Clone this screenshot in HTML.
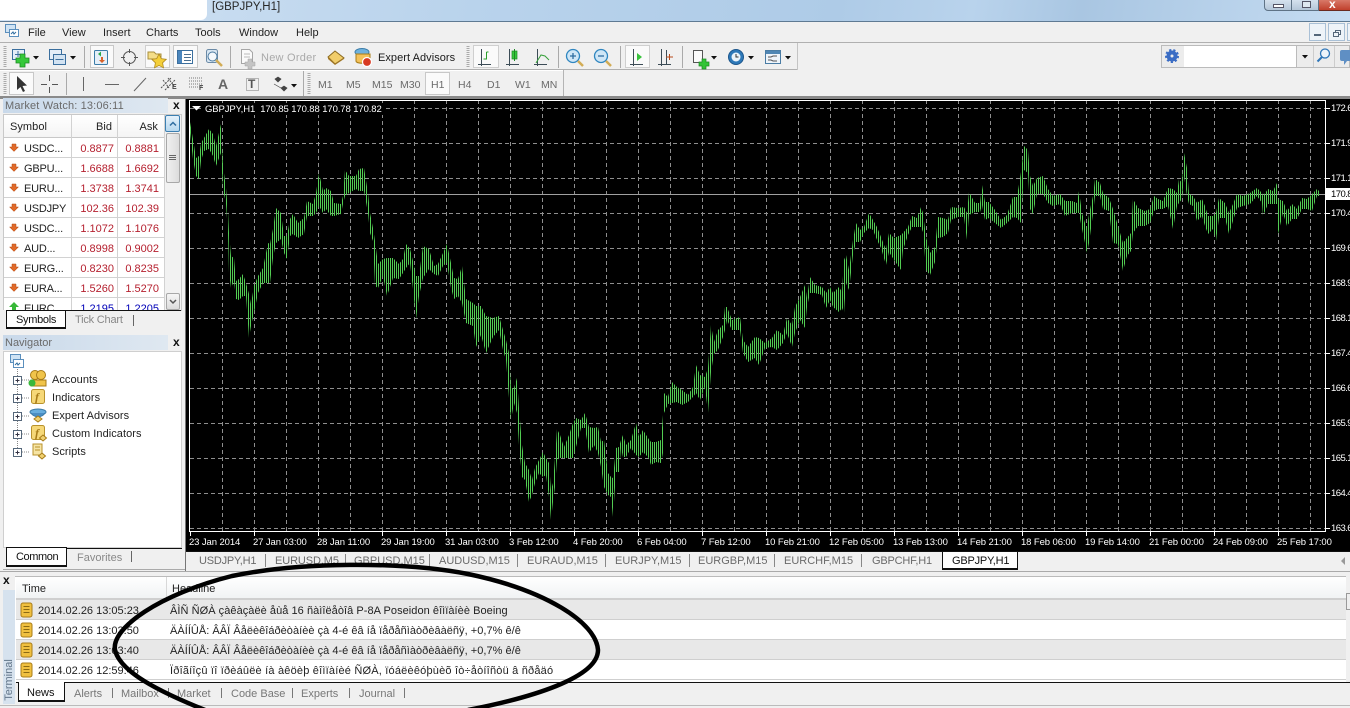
<!DOCTYPE html>
<html>
<head>
<meta charset="utf-8">
<title>GBPJPY,H1</title>
<style>
html,body{margin:0;padding:0}
body{width:1350px;height:708px;position:relative;overflow:hidden;background:#f0f0f0;font:11px "Liberation Sans",sans-serif;color:#222}
div{position:absolute;box-sizing:border-box}
.t{white-space:nowrap;line-height:14px;height:14px;margin-top:1px}
.g{color:#6a6a6a}
.w{color:#fff;font-size:9.5px;line-height:12px;height:12px;white-space:nowrap;letter-spacing:-.1px;margin-top:1px}
.y{letter-spacing:-.55px}
.r{text-align:right;color:#b5202f}
.b{color:#0000b8}
.s{letter-spacing:.05px}
svg{position:absolute;left:0;top:0}
</style>
</head>
<body>
<!-- title bar -->
<div style="left:0;top:0;width:1350px;height:21px;background:linear-gradient(100deg,#d3e3f3 0,#b9d3ec 35%,#aecbe7 62%,#b9d3ec 72%,#a9c6e2 80%,#c5dcf2 100%)"></div>
<div style="left:0;top:0;width:207px;height:20px;background:#fff;border-radius:0 0 6px 0"></div>
<div class="t" style="left:212px;top:-1px;font-size:11.5px;color:#262626">[GBPJPY,H1]</div>
<div style="left:1264px;top:-2px;width:28px;height:13px;background:linear-gradient(#d8e4f0,#b4c6d8);border:1px solid #5f7386;border-radius:0 0 0 4px"></div>
<div style="left:1292px;top:-2px;width:27px;height:13px;background:linear-gradient(#d8e4f0,#b4c6d8);border:1px solid #5f7386;border-left:0"></div>
<div style="left:1319px;top:-2px;width:31px;height:13px;background:linear-gradient(#dd8474,#c0402c);border-bottom:1px solid #6a2a20"></div>
<div style="left:1273px;top:4px;width:11px;height:4px;background:#fff;border:1px solid #556"></div>
<div style="left:1302px;top:1px;width:9px;height:7px;background:#dfe8f0;border:1px solid #556"></div>
<div class="t" style="left:1329px;top:-4px;font-weight:bold;color:#fff;font-size:12px">x</div>
<div style="left:0;top:21px;width:1350px;height:1px;background:#5f7a93"></div>

<!-- menu -->
<div style="left:0;top:42px;width:1350px;height:1px;background:#b0b0b0"></div>
<div class="t" style="left:28px;top:25px">File</div>
<div class="t" style="left:62px;top:25px">View</div>
<div class="t" style="left:103px;top:25px">Insert</div>
<div class="t" style="left:146px;top:25px">Charts</div>
<div class="t" style="left:195px;top:25px">Tools</div>
<div class="t" style="left:239px;top:25px">Window</div>
<div class="t" style="left:296px;top:25px">Help</div>
<div style="left:1309px;top:23px;width:17px;height:18px;background:#eef3f8;border:1px solid #a9c0d6"></div>
<div style="left:1328px;top:23px;width:17px;height:18px;background:#eef3f8;border:1px solid #a9c0d6"></div>
<div style="left:1347px;top:23px;width:5px;height:18px;background:#eef3f8;border:1px solid #a9c0d6"></div>
<div style="left:1314px;top:34px;width:7px;height:2px;background:#55677a"></div>
<div style="left:1335px;top:30px;width:6px;height:5px;border:1px solid #55677a"></div>
<div style="left:1333px;top:32px;width:6px;height:5px;border:1px solid #55677a;background:#eef3f8"></div>

<!-- toolbars -->
<div style="left:0;top:69px;width:798px;height:1px;background:#b0b0b0"></div>
<div style="left:797px;top:43px;width:1px;height:27px;background:#c4c4c4"></div>
<div style="left:0;top:70px;width:564px;height:1px;background:#fff"></div>
<div style="left:563px;top:70px;width:1px;height:27px;background:#b4b4b4"></div>
<div style="left:0;top:96px;width:1350px;height:3px;background:#8a8a8a"></div>
<!-- pressed buttons -->
<div style="left:90px;top:45px;width:24px;height:23px;background:#fafafa;border:1px solid #c8c8c8"></div>
<div style="left:145px;top:45px;width:25px;height:23px;background:#fafafa;border:1px solid #cfcfcf"></div>
<div style="left:173px;top:45px;width:25px;height:23px;background:#fafafa;border:1px solid #c8c8c8"></div>
<div style="left:473px;top:45px;width:26px;height:23px;background:#fafafa;border:1px solid #cfcfcf"></div>
<div style="left:625px;top:45px;width:25px;height:23px;background:#fafafa;border:1px solid #cfcfcf"></div>
<div style="left:9px;top:72px;width:25px;height:23px;background:#fafafa;border:1px solid #c8c8c8"></div>
<div style="left:425px;top:72px;width:25px;height:23px;background:#fafafa;border:1px solid #c8c8c8"></div>

<div class="t" style="left:261px;top:50px;color:#a9a9a9;letter-spacing:.25px">New Order</div>
<div class="t s" style="left:378px;top:50px;color:#1a1a1a">Expert Advisors</div>
<div class="t" style="left:218px;top:76px;font-size:14px;font-weight:bold;color:#666">A</div>
<div class="t" style="left:248px;top:76px;font-size:12px;font-weight:bold;color:#555">T</div>
<div class="t" style="left:172px;top:83px;font-size:7px;line-height:7px;height:7px;font-weight:bold;color:#444">E</div>
<div class="t" style="left:199px;top:84px;font-size:7px;line-height:7px;height:7px;font-weight:bold;color:#444">F</div>
<div class="t g" style="left:318px;top:77px;font-size:10.5px">M1</div>
<div class="t g" style="left:346px;top:77px;font-size:10.5px">M5</div>
<div class="t g" style="left:372px;top:77px;font-size:10.5px">M15</div>
<div class="t g" style="left:400px;top:77px;font-size:10.5px">M30</div>
<div class="t g" style="left:431px;top:77px;font-size:10.5px">H1</div>
<div class="t g" style="left:458px;top:77px;font-size:10.5px">H4</div>
<div class="t g" style="left:487px;top:77px;font-size:10.5px">D1</div>
<div class="t g" style="left:515px;top:77px;font-size:10.5px">W1</div>
<div class="t g" style="left:541px;top:77px;font-size:10.5px">MN</div>

<!-- right toolbar -->
<div style="left:1161px;top:45px;width:189px;height:23px;background:#ececec;border:1px solid #bbb"></div>
<div style="left:1184px;top:46px;width:113px;height:21px;background:#fff;border-right:1px solid #bbb"></div>
<div style="left:1313px;top:46px;width:1px;height:21px;background:#ccc"></div>
<div style="left:1334px;top:46px;width:1px;height:21px;background:#ccc"></div>

<!-- left panels -->
<div style="left:0;top:99px;width:186px;height:473px;background:#f0f0f0"></div>
<div style="left:185px;top:99px;width:1px;height:473px;background:#777"></div>
<!-- market watch -->
<div style="left:3px;top:98px;width:165px;height:15px;background:linear-gradient(90deg,#c9d9ea,#dfe8f1)"></div>
<div class="t g" style="left:5px;top:98px;letter-spacing:.15px">Market Watch: 13:06:11</div>
<div class="t" style="left:173px;top:97px;font-weight:bold;font-size:12px;color:#111">x</div>
<div style="left:3px;top:114px;width:179px;height:197px;background:#fff;border:1px solid #c9c9c9;overflow:hidden">
  <div style="left:0;top:0;width:161px;height:23px;background:linear-gradient(#fff,#f4f4f4)"></div>
</div>
<div style="left:4px;top:137px;width:160px;height:1px;background:#c8c8c8"></div>
<div style="left:4px;top:157px;width:160px;height:1px;background:#d2d2d2"></div>
<div style="left:4px;top:177px;width:160px;height:1px;background:#d2d2d2"></div>
<div style="left:4px;top:197px;width:160px;height:1px;background:#d2d2d2"></div>
<div style="left:4px;top:217px;width:160px;height:1px;background:#d2d2d2"></div>
<div style="left:4px;top:237px;width:160px;height:1px;background:#d2d2d2"></div>
<div style="left:4px;top:257px;width:160px;height:1px;background:#d2d2d2"></div>
<div style="left:4px;top:277px;width:160px;height:1px;background:#d2d2d2"></div>
<div style="left:4px;top:297px;width:160px;height:1px;background:#d2d2d2"></div>
<div style="left:71px;top:115px;width:1px;height:195px;background:#d2d2d2"></div>
<div style="left:117px;top:115px;width:1px;height:195px;background:#d2d2d2"></div>
<div style="left:164px;top:115px;width:1px;height:195px;background:#d2d2d2"></div>
<div class="t s" style="left:10px;top:119px">Symbol</div>
<div class="t s" style="left:60px;width:52px;top:119px;text-align:right">Bid</div>
<div class="t s" style="left:108px;width:50px;top:119px;text-align:right">Ask</div>
<div class="t" style="left:24px;top:141px;letter-spacing:-.2px">USDC...</div><div class="t r" style="left:60px;width:54px;top:141px">0.8877</div><div class="t r" style="left:106px;width:53px;top:141px">0.8881</div>
<div class="t" style="left:24px;top:161px;letter-spacing:-.2px">GBPU...</div><div class="t r" style="left:60px;width:54px;top:161px">1.6688</div><div class="t r" style="left:106px;width:53px;top:161px">1.6692</div>
<div class="t" style="left:24px;top:181px;letter-spacing:-.2px">EURU...</div><div class="t r" style="left:60px;width:54px;top:181px">1.3738</div><div class="t r" style="left:106px;width:53px;top:181px">1.3741</div>
<div class="t" style="left:24px;top:201px;letter-spacing:-.2px">USDJPY</div><div class="t r" style="left:60px;width:54px;top:201px">102.36</div><div class="t r" style="left:106px;width:53px;top:201px">102.39</div>
<div class="t" style="left:24px;top:221px;letter-spacing:-.2px">USDC...</div><div class="t r" style="left:60px;width:54px;top:221px">1.1072</div><div class="t r" style="left:106px;width:53px;top:221px">1.1076</div>
<div class="t" style="left:24px;top:241px;letter-spacing:-.2px">AUD...</div><div class="t r" style="left:60px;width:54px;top:241px">0.8998</div><div class="t r" style="left:106px;width:53px;top:241px">0.9002</div>
<div class="t" style="left:24px;top:261px;letter-spacing:-.2px">EURG...</div><div class="t r" style="left:60px;width:54px;top:261px">0.8230</div><div class="t r" style="left:106px;width:53px;top:261px">0.8235</div>
<div class="t" style="left:24px;top:281px;letter-spacing:-.2px">EURA...</div><div class="t r" style="left:60px;width:54px;top:281px">1.5260</div><div class="t r" style="left:106px;width:53px;top:281px">1.5270</div>
<div class="t" style="left:24px;top:301px;letter-spacing:-.2px">EURC</div><div class="t r b" style="left:60px;width:54px;top:301px">1.2195</div><div class="t r b" style="left:106px;width:53px;top:301px">1.2205</div>
<!-- mw scrollbar -->
<div style="left:165px;top:115px;width:16px;height:195px;background:#f2f2f2"></div>
<div style="left:165px;top:115px;width:15px;height:17px;background:linear-gradient(#e6f2fb,#b6d7ee);border:1px solid #3c7fb1;border-radius:2px"></div>
<div style="left:166px;top:133px;width:14px;height:50px;background:linear-gradient(90deg,#f0f0f0,#dcdcdc);border:1px solid #a8a8a8;border-radius:2px"></div>
<div style="left:166px;top:293px;width:14px;height:17px;background:linear-gradient(#f6f6f6,#dcdcdc);border:1px solid #a8a8a8;border-radius:2px"></div>
<div style="left:169px;top:155px;width:7px;height:5px;border-top:1px solid #666;border-bottom:1px solid #666"></div>
<div style="left:169px;top:157px;width:7px;height:1px;background:#666"></div>
<!-- mw tabs -->
<div style="left:3px;top:310px;width:178px;height:20px;background:#f0f0f0"></div>
<div style="left:65px;top:310px;width:116px;height:1px;background:#111"></div>
<div style="left:6px;top:310px;width:60px;height:19px;background:#fff;border:1px solid #111;border-bottom-width:2px"></div>
<div class="t" style="left:16px;top:312px;color:#111;letter-spacing:-.3px">Symbols</div>
<div class="t g" style="left:75px;top:312px;color:#888;letter-spacing:-.2px">Tick Chart</div>
<div style="left:133px;top:315px;width:1px;height:11px;background:#666"></div>

<!-- navigator -->
<div style="left:3px;top:335px;width:165px;height:15px;background:linear-gradient(90deg,#c9d9ea,#dfe8f1)"></div>
<div class="t g" style="left:5px;top:335px">Navigator</div>
<div class="t" style="left:173px;top:334px;font-weight:bold;font-size:12px;color:#111">x</div>
<div style="left:3px;top:351px;width:179px;height:197px;background:#fff;border:1px solid #cfcfcf"></div>
<div class="t s" style="left:52px;top:372px">Accounts</div>
<div class="t s" style="left:52px;top:390px">Indicators</div>
<div class="t s" style="left:52px;top:408px">Expert Advisors</div>
<div class="t s" style="left:52px;top:426px">Custom Indicators</div>
<div class="t s" style="left:52px;top:444px">Scripts</div>
<div style="left:3px;top:548px;width:179px;height:19px;background:#f0f0f0"></div>
<div style="left:66px;top:548px;width:116px;height:1px;background:#111"></div>
<div style="left:6px;top:547px;width:61px;height:20px;background:#fff;border:1px solid #111;border-bottom-width:2px"></div>
<div class="t" style="left:16px;top:549px;color:#111;letter-spacing:-.4px">Common</div>
<div class="t g" style="left:77px;top:550px;color:#888">Favorites</div>
<div style="left:131px;top:551px;width:1px;height:11px;background:#666"></div>
<div style="left:3px;top:569px;width:182px;height:1px;background:#aaa"></div>

<!-- chart -->
<div style="left:186px;top:99px;width:1164px;height:452px;background:#000"></div>
<svg width="1350" height="708" viewBox="0 0 1350 708">
<defs>
<pattern id="bars" x="0" y="0" width="2" height="4" patternUnits="userSpaceOnUse"><rect x="0" y="0" width="1" height="4" fill="#52cc52" shape-rendering="crispEdges"/></pattern>
</defs>
<g stroke="#8e8e8e" stroke-width="1" fill="none" stroke-dasharray="4 3" shape-rendering="crispEdges">
<path d="M190 108.5H1330M190 143.5H1330M190 178.5H1330M190 213.5H1330M190 248.5H1330M190 283.5H1330M190 318.5H1330M190 353.5H1330M190 388.5H1330M190 423.5H1330M190 458.5H1330M190 493.5H1330M190 528.5H1330"/>
<path d="M222.5 100V531M254.5 100V531M286.5 100V531M318.5 100V531M350.5 100V531M382.5 100V531M414.5 100V531M446.5 100V531M478.5 100V531M510.5 100V531M542.5 100V531M574.5 100V531M606.5 100V531M638.5 100V531M670.5 100V531M702.5 100V531M734.5 100V531M766.5 100V531M798.5 100V531M830.5 100V531M862.5 100V531M894.5 100V531M926.5 100V531M958.5 100V531M990.5 100V531M1022.5 100V531M1054.5 100V531M1086.5 100V531M1118.5 100V531M1150.5 100V531M1182.5 100V531M1214.5 100V531M1246.5 100V531M1278.5 100V531M1310.5 100V531"/>
</g>
<path d="M190 194.5H1325" stroke="#a0a0a0" shape-rendering="crispEdges"/>
<polygon fill="url(#bars)" points="190,122 193,139 196,158 199,156 201,143 204,138 209,129 213,134 216,146 221,124 223,166 226,188 228,211 229,233 231,256 234,258 236,281 239,279 243,274 246,283 249,294 251,304 254,286 258,276 263,268 268,243 270,244 273,229 276,208 281,213 284,236 287,236 290,219 293,214 298,223 304,218 307,201 313,204 316,193 319,173 323,191 326,188 331,191 334,203 341,204 343,196 345,170 349,176 356,176 359,169 364,168 368,193 370,213 373,228 375,241 378,264 383,259 387,258 393,258 399,264 403,259 406,244 410,249 413,261 416,276 419,276 423,246 429,249 434,266 438,264 443,253 447,244 451,263 454,278 458,279 462,266 466,299 473,303 476,306 481,306 486,316 493,318 499,316 503,330 506,340 509,353 511,388 514,388 517,378 519,408 522,445 525,463 529,470 532,480 535,468 539,460 543,452 546,458 549,463 551,490 553,483 555,458 557,429 560,435 564,447 569,435 573,423 576,418 581,420 585,413 589,427 594,428 598,427 601,442 604,440 608,473 611,477 613,478 616,448 619,447 621,440 623,435 626,445 631,440 636,423 639,437 643,430 648,438 651,442 656,442 661,440 663,415 664,393 668,397 672,382 677,387 682,390 688,395 693,387 696,365 700,375 705,377 708,368 711,325 714,342 718,330 723,325 725,307 727,307 732,320 740,317 743,340 748,347 755,337 759,338 765,343 772,338 777,330 783,335 787,318 792,325 795,307 800,297 805,285 807,298 810,277 815,285 822,287 826,293 830,287 833,293 839,287 842,292 844,260 846,255 849,270 853,240 856,223 860,230 864,227 869,213 873,220 877,227 881,237 886,250 889,233 894,238 901,235 903,233 908,227 912,216 917,218 921,207 923,213 926,237 930,253 935,247 938,217 943,218 948,220 951,207 958,208 964,207 967,213 969,192 975,203 980,203 982,185 985,202 989,202 995,210 1001,220 1007,215 1013,197 1017,197 1021,172 1024,146 1028,150 1030,176 1033,186 1037,178 1043,176 1048,189 1053,196 1060,194 1065,201 1072,201 1077,203 1079,191 1082,213 1085,223 1087,229 1089,214 1093,196 1095,179 1100,183 1103,193 1109,198 1113,209 1118,226 1123,243 1127,238 1131,233 1133,199 1138,208 1145,211 1150,209 1154,196 1158,199 1163,201 1168,188 1173,189 1177,193 1179,179 1182,183 1184,153 1187,168 1189,194 1193,196 1197,203 1202,199 1205,206 1208,216 1213,216 1216,213 1219,198 1225,203 1229,213 1233,204 1237,194 1243,196 1250,193 1257,188 1262,193 1263,196 1268,189 1273,191 1277,183 1278,199 1283,201 1287,211 1292,204 1297,209 1302,198 1307,199 1312,194 1317,189 1319,191 1319,196 1317,196 1312,211 1307,209 1302,209 1297,219 1292,219 1287,226 1283,213 1278,234 1277,204 1273,204 1268,204 1263,216 1262,203 1257,196 1250,204 1243,206 1237,208 1233,221 1229,234 1225,218 1219,218 1216,241 1213,229 1208,234 1205,226 1202,216 1197,221 1193,206 1189,204 1187,196 1184,176 1182,199 1179,203 1177,206 1173,229 1168,206 1163,209 1158,209 1154,211 1150,223 1145,226 1138,226 1133,233 1131,251 1127,256 1123,271 1118,244 1113,243 1109,211 1103,209 1100,196 1095,196 1093,214 1089,243 1087,253 1085,243 1082,229 1079,213 1077,213 1072,213 1065,216 1060,204 1053,206 1048,203 1043,194 1037,194 1033,214 1030,209 1028,173 1024,170 1021,223 1017,218 1013,217 1007,223 1001,228 995,223 989,218 985,220 982,205 980,212 975,212 969,215 967,240 964,217 958,217 951,220 948,233 943,237 938,238 935,262 930,275 926,270 923,232 921,227 917,227 912,227 908,235 903,250 901,270 894,260 889,252 886,265 881,248 877,240 873,230 869,228 864,233 860,242 856,242 853,255 849,290 846,283 844,313 842,308 839,312 833,307 830,300 826,308 822,295 815,293 810,293 807,307 805,328 800,320 795,333 792,347 787,333 783,343 777,350 772,347 765,348 759,365 755,358 748,362 743,353 740,330 732,330 727,320 725,330 723,337 718,350 714,354 711,372 708,413 705,387 700,400 696,393 693,397 688,402 682,405 677,402 672,403 668,404 664,413 663,453 661,463 656,462 651,465 648,457 643,452 639,457 636,455 631,448 626,457 623,457 621,448 619,472 616,472 613,517 611,497 608,495 604,487 601,467 598,453 594,445 589,453 585,428 581,428 576,447 573,458 569,458 564,458 560,458 557,460 555,487 553,502 551,520 549,497 546,475 543,477 539,473 535,483 532,495 529,502 525,480 522,477 519,445 517,413 514,403 511,420 509,398 506,360 503,350 499,330 493,337 486,353 481,335 476,347 473,326 466,323 462,303 458,296 454,299 451,288 447,263 443,266 438,276 434,274 429,269 423,278 419,296 416,319 413,289 410,263 406,268 403,273 399,279 393,278 387,296 383,276 378,288 375,286 373,241 370,233 368,213 364,191 359,191 356,189 349,193 345,196 343,204 341,214 334,216 331,216 326,209 323,213 319,206 316,213 313,216 307,216 304,234 298,238 293,234 290,236 287,259 284,253 281,239 276,243 273,258 270,283 268,283 263,283 258,293 254,313 251,326 249,338 246,296 243,296 239,300 236,299 234,281 231,288 229,273 228,233 226,204 223,189 221,153 216,166 213,156 209,149 204,151 201,161 199,179 196,176 193,159 190,133"/>
<path d="M189.5 100.5H1325.5V531.5H189.5Z" fill="none" stroke="#fff" shape-rendering="crispEdges"/>
<path d="M190.5 531V536M254.5 531V536M318.5 531V536M382.5 531V536M446.5 531V536M510.5 531V536M574.5 531V536M638.5 531V536M702.5 531V536M766.5 531V536M830.5 531V536M894.5 531V536M958.5 531V536M1022.5 531V536M1086.5 531V536M1150.5 531V536M1214.5 531V536M1278.5 531V536M1325 108.5H1330M1325 143.5H1330M1325 178.5H1330M1325 213.5H1330M1325 248.5H1330M1325 283.5H1330M1325 318.5H1330M1325 353.5H1330M1325 388.5H1330M1325 423.5H1330M1325 458.5H1330M1325 493.5H1330M1325 528.5H1330" stroke="#fff" shape-rendering="crispEdges"/>
<path d="M192 106h9l-4.500 4.500z" fill="#fff"/>
</svg>
<div style="left:204px;top:103px;width:180px;height:12px;background:#000"></div>
<div class="w" style="left:205px;top:103px">GBPJPY,H1&nbsp; 170.85 170.88 170.78 170.82</div>
<div class="w y" style="left:1331px;top:102px">172.66</div>
<div class="w y" style="left:1331px;top:137px">171.91</div>
<div class="w y" style="left:1331px;top:172px">171.16</div>
<div class="w y" style="left:1331px;top:207px">170.41</div>
<div class="w y" style="left:1331px;top:242px">169.66</div>
<div class="w y" style="left:1331px;top:277px">168.91</div>
<div class="w y" style="left:1331px;top:312px">168.16</div>
<div class="w y" style="left:1331px;top:347px">167.41</div>
<div class="w y" style="left:1331px;top:382px">166.66</div>
<div class="w y" style="left:1331px;top:417px">165.91</div>
<div class="w y" style="left:1331px;top:452px">165.16</div>
<div class="w y" style="left:1331px;top:487px">164.41</div>
<div class="w y" style="left:1331px;top:522px">163.66</div>
<div style="left:1325px;top:188px;width:25px;height:12px;background:#fff"></div>
<div class="w y" style="left:1331px;top:188px;color:#000">170.82</div>
<div class="w" style="left:189px;top:536px">23 Jan 2014</div>
<div class="w" style="left:253px;top:536px">27 Jan 03:00</div>
<div class="w" style="left:317px;top:536px">28 Jan 11:00</div>
<div class="w" style="left:381px;top:536px">29 Jan 19:00</div>
<div class="w" style="left:445px;top:536px">31 Jan 03:00</div>
<div class="w" style="left:509px;top:536px">3 Feb 12:00</div>
<div class="w" style="left:573px;top:536px">4 Feb 20:00</div>
<div class="w" style="left:637px;top:536px">6 Feb 04:00</div>
<div class="w" style="left:701px;top:536px">7 Feb 12:00</div>
<div class="w" style="left:765px;top:536px">10 Feb 21:00</div>
<div class="w" style="left:829px;top:536px">12 Feb 05:00</div>
<div class="w" style="left:893px;top:536px">13 Feb 13:00</div>
<div class="w" style="left:957px;top:536px">14 Feb 21:00</div>
<div class="w" style="left:1021px;top:536px">18 Feb 06:00</div>
<div class="w" style="left:1085px;top:536px">19 Feb 14:00</div>
<div class="w" style="left:1149px;top:536px">21 Feb 00:00</div>
<div class="w" style="left:1213px;top:536px">24 Feb 09:00</div>
<div class="w" style="left:1277px;top:536px">25 Feb 17:00</div>

<!-- chart tabs -->
<div style="left:186px;top:551px;width:1164px;height:20px;background:#f0f0f0"></div>
<div style="left:186px;top:551px;width:1164px;height:1px;background:#111"></div>
<div class="t g" style="left:199px;top:553px;letter-spacing:-.2px">USDJPY,H1</div><div style="left:265px;top:554px;width:1px;height:13px;background:#888"></div>
<div class="t g" style="left:275px;top:553px;letter-spacing:-.1px">EURUSD,M5</div><div style="left:345px;top:554px;width:1px;height:13px;background:#888"></div>
<div class="t g" style="left:354px;top:553px">GBPUSD,M15</div><div style="left:429px;top:554px;width:1px;height:13px;background:#888"></div>
<div class="t g" style="left:439px;top:553px">AUDUSD,M15</div><div style="left:517px;top:554px;width:1px;height:13px;background:#888"></div>
<div class="t g" style="left:527px;top:553px">EURAUD,M15</div><div style="left:605px;top:554px;width:1px;height:13px;background:#888"></div>
<div class="t g" style="left:615px;top:553px">EURJPY,M15</div><div style="left:689px;top:554px;width:1px;height:13px;background:#888"></div>
<div class="t g" style="left:698px;top:553px">EURGBP,M15</div><div style="left:774px;top:554px;width:1px;height:13px;background:#888"></div>
<div class="t g" style="left:784px;top:553px">EURCHF,M15</div><div style="left:861px;top:554px;width:1px;height:13px;background:#888"></div>
<div class="t g" style="left:872px;top:553px;letter-spacing:-.2px">GBPCHF,H1</div>
<div style="left:942px;top:551px;width:76px;height:19px;background:#fff;border:1px solid #111;border-bottom-width:2px"></div>
<div class="t" style="left:952px;top:553px;color:#111;letter-spacing:-.2px">GBPJPY,H1</div>
<div style="left:1341px;top:557px;width:0;height:0;border:4px solid transparent;border-right:4px solid #999;border-left:0"></div>

<!-- terminal -->
<div style="left:0;top:571px;width:1350px;height:137px;background:#f0f0f0;border-top:1px solid #aaa"></div>
<div class="t" style="left:3px;top:572px;font-weight:bold;font-size:12px;color:#111">x</div>
<div style="left:3px;top:590px;width:12px;height:114px;background:#d6e2ee"></div>
<div style="left:-19px;top:673px;width:56px;height:14px;line-height:14px;transform:rotate(-90deg);font-size:11px;color:#62768a;text-align:center">Terminal</div>
<div style="left:15px;top:576px;width:1331px;height:106px;background:#fff;border-top:1px solid #bbb"></div>
<div style="left:16px;top:577px;width:1330px;height:21px;background:linear-gradient(#fff,#f1f3f4)"></div>
<div style="left:16px;top:598px;width:1330px;height:2px;background:#cfcfcf"></div>
<div style="left:16px;top:600px;width:1330px;height:20px;background:#e8e8e8;border-bottom:1px solid #cfcfcf"></div>
<div style="left:16px;top:620px;width:1330px;height:20px;background:#fff;border-bottom:1px solid #cfcfcf"></div>
<div style="left:16px;top:640px;width:1330px;height:20px;background:#e8e8e8;border-bottom:1px solid #cfcfcf"></div>
<div style="left:16px;top:660px;width:1330px;height:20px;background:#fff;border-bottom:1px solid #cfcfcf"></div>
<div style="left:166px;top:577px;width:1px;height:22px;background:#d8d8d8"></div>
<div style="left:1346px;top:593px;width:4px;height:17px;background:#eee;border:1px solid #999;border-right:0"></div>
<div class="t" style="left:22px;top:581px">Time</div>
<div class="t" style="left:172px;top:581px">Headline</div>
<div class="t" style="left:38px;top:603px">2014.02.26 13:05:23</div>
<div class="t" style="left:38px;top:623px">2014.02.26 13:03:50</div>
<div class="t" style="left:38px;top:643px">2014.02.26 13:03:40</div>
<div class="t" style="left:38px;top:663px">2014.02.26 12:59:46</div>
<div class="t" style="left:170px;top:603px;letter-spacing:.05px">ÂÌÑ ÑØÀ çàêàçàëè åùå 16 ñàìîëåòîâ P-8A Poseidon êîìïàíèè Boeing</div>
<div class="t" style="left:170px;top:623px;letter-spacing:.03px">ÄÀÍÍÛÅ: ÂÂÏ Âåëèêîáðèòàíèè çà 4-é êâ íå ïåðåñìàòðèâàëñÿ, +0,7% ê/ê</div>
<div class="t" style="left:170px;top:643px;letter-spacing:.03px">ÄÀÍÍÛÅ: ÂÂÏ Âåëèêîáðèòàíèè çà 4-é êâ íå ïåðåñìàòðèâàëñÿ, +0,7% ê/ê</div>
<div class="t" style="left:170px;top:663px;letter-spacing:.2px">Ïðîãíîçû ïî ïðèáûëè íà àêöèþ êîìïàíèé ÑØÀ, ïóáëèêóþùèõ îò÷åòíîñòü â ñðåäó</div>
<div style="left:16px;top:682px;width:1334px;height:1px;background:#111"></div>
<div style="left:18px;top:682px;width:47px;height:20px;background:#fff;border:1px solid #111;border-top:0;border-bottom-width:2px"></div>
<div class="t" style="left:27px;top:685px;color:#111">News</div>
<div class="t" style="left:74px;top:686px;color:#777">Alerts</div>
<div class="t" style="left:121px;top:686px;color:#777">Mailbox</div>
<div class="t" style="left:177px;top:686px;color:#777">Market</div>
<div class="t" style="left:231px;top:686px;color:#777">Code Base</div>
<div class="t" style="left:301px;top:686px;color:#777">Experts</div>
<div class="t" style="left:359px;top:686px;color:#777">Journal</div>
<div style="left:112px;top:688px;width:1px;height:10px;background:#777"></div>
<div style="left:168px;top:688px;width:1px;height:10px;background:#777"></div>
<div style="left:221px;top:688px;width:1px;height:10px;background:#777"></div>
<div style="left:292px;top:688px;width:1px;height:10px;background:#777"></div>
<div style="left:349px;top:688px;width:1px;height:10px;background:#777"></div>
<div style="left:404px;top:688px;width:1px;height:10px;background:#777"></div>
<div style="left:0;top:705px;width:1350px;height:1px;background:#bbb"></div>

<!-- icons -->
<svg width="1350" height="708" viewBox="0 0 1350 708" style="pointer-events:none">
<defs>
<symbol id="dd" overflow="visible"><path d="M0 0h6l-3 3.500z" fill="#111"/></symbol>
<symbol id="grip" overflow="visible"><path d="M0 0v22" stroke="#aaa" stroke-width="3" stroke-dasharray="1 1"/></symbol>
<symbol id="dn" overflow="visible"><path d="M-2 -4h4v3h2.500l-4.500 4.500l-4.500 -4.500h2.500z" fill="#e06a2a" stroke="#b34a14" stroke-width=".5"/></symbol>
<symbol id="doc" overflow="visible"><rect x="-5" y="-7" width="11" height="14" rx="2" fill="#f0c040" stroke="#a87c18"/><path d="M-2.500-3.500h6M-2.500-.5h6M-2.500 2.500h6" stroke="#8a6a14"/></symbol>
<symbol id="plus" overflow="visible"><rect x="-4" y="-4" width="8" height="8" fill="#fff" stroke="#55677a"/><path d="M-2 0h4M0-2v4" stroke="#334"/></symbol>
</defs>

<!-- menu icon -->
<g fill="#fff" stroke="#5b8fbd"><rect x="5.500" y="24.500" width="10" height="8" fill="#cfe3f4"/><rect x="9.500" y="29.500" width="9" height="7"/></g>
<path d="M11 34l2-2l1 2l2-2" stroke="#2f6da0" fill="none"/>
<!-- toolbar grips -->
<use href="#grip" x="5" y="46"/><use href="#grip" x="5" y="73"/><use href="#grip" x="468" y="46"/><use href="#grip" x="309" y="73"/>
<!-- separators -->
<g stroke="#aaa" shape-rendering="crispEdges"><path d="M84.500 46v22M230.500 46v22M558.500 46v22M620.500 46v22M682.500 46v22M66.500 73v22M303.500 71v25"/></g>
<!-- new chart -->
<rect x="12.500" y="49.500" width="12" height="10" fill="#e4eef8" stroke="#3b6f9e"/><path d="M15 54.500h7M18 51v6" stroke="#3b6f9e"/>
<path d="M20 54h5v4h4v5h-4v4h-5v-4h-4v-5h4z" fill="#35c83a" stroke="#1c8a22" stroke-width=".8"/>
<use href="#dd" x="33" y="56"/>
<!-- profiles -->
<rect x="49.500" y="49.500" width="12" height="10" fill="#e4eef8" stroke="#3b6f9e"/><rect x="53.500" y="54.500" width="12" height="10" fill="#d3e3f2" stroke="#3b6f9e"/><path d="M55.500 59.500h8" stroke="#3b6f9e"/>
<use href="#dd" x="70" y="56"/>
<!-- market watch -->
<rect x="94.500" y="50.500" width="13" height="14" rx="1" fill="#e5eff8" stroke="#3b7ca8"/><path d="M98 54l3-2.500 0 5z" fill="#2aa84a"/><path d="M101 57v3h-2l3 3 3-3h-2v-3z" fill="#d8622a"/>
<!-- crosshair -->
<circle cx="129.500" cy="57.500" r="6" fill="none" stroke="#555"/><path d="M129.500 49v4M129.500 62v4M121 57.500h4M134 57.500h4" stroke="#555"/>
<!-- navigator folder star -->
<path d="M148 52h6l2 2h5v5h-13z" fill="#f4dd88" stroke="#a88e3c"/><path d="M159 54l2.300 4.600 5 .7-3.700 3.500.9 5-4.500-2.400-4.500 2.400.9-5-3.700-3.500 5-.7z" fill="#f4cf3a" stroke="#b08a20" stroke-width=".8"/>
<!-- terminal -->
<rect x="177.500" y="50.500" width="15" height="13" fill="#fff" stroke="#3b6f9e"/><rect x="178" y="51" width="4" height="12" fill="#4b86bd"/><path d="M184 54.500h7M184 57.500h7M184 60.500h7" stroke="#4b6f90"/>
<!-- tester -->
<rect x="206.500" y="49.500" width="11" height="13" rx="2" fill="#d8e6f2" stroke="#6b8aa6"/><circle cx="212.500" cy="56.500" r="4.500" fill="#f4f8fc" stroke="#4b7aa0"/><path d="M216 60l6 6" stroke="#d2ac55" stroke-width="2.500"/>
<!-- new order -->
<path d="M241.500 49.500h8l3 3v11h-11z" fill="#fafafa" stroke="#a6a6a6"/><path d="M244 54h6M244 57h6" stroke="#bbb"/><path d="M248 59h4v3h3v4h-3v3h-4v-3h-3v-4h3z" fill="#c4c4c4" stroke="#a4a4a4" stroke-width=".5"/>
<!-- gold -->
<path d="M328 57l7-6 9 7-9 6z" fill="#f1cd6a" stroke="#8a6a22"/><path d="M328 57v2l7 6 9-6v-1l-9 6z" fill="#a67a28"/>
<!-- EA -->
<ellipse cx="362" cy="52" rx="7" ry="3.500" fill="#6fb2dd" stroke="#3b7ca8"/><path d="M356 54h14v7c0 3-14 3-14 0z" fill="#f4c25a" stroke="#a87c18"/><circle cx="367" cy="62" r="4.500" fill="#d83a22" stroke="#fff" stroke-width="1.200"/>
<!-- chart type icons -->
<g stroke="#3c4c56" fill="none">
<path d="M481.500 49v17M478 64.500h13"/>
<path d="M509.500 49v17M506 64.500h13"/>
<path d="M537.500 49v17M534 64.500h13"/>
<path d="M633.500 49v17M630 64.500h13"/>
<path d="M661.500 49v17M658 64.500h13"/>
<path d="M666.500 50v14"/>
</g>
<path d="M486.500 52v7h-3M486.500 52h2" stroke="#2aa02a" fill="none"/>
<rect x="512" y="51" width="5" height="8" fill="#37c83c" stroke="#1c8a22" stroke-width=".7"/><path d="M514.500 49v12" stroke="#1c8a22"/>
<path d="M536 63l5-8 4 1 4 4" stroke="#36a03a" fill="none"/>
<path d="M637 53v8l5-4z" fill="#38c23c"/>
<path d="M666 57h7M669.500 54v6" stroke="#b84a1c"/>
<!-- zoom -->
<circle cx="573" cy="56" r="6.500" fill="#cfe6f6" stroke="#2f86c0" stroke-width="1.300"/><path d="M570 56h6M573 53v6" stroke="#2f6da0" stroke-width="1.300"/><path d="M578 61l5 5" stroke="#d2ac55" stroke-width="2.500"/>
<circle cx="601" cy="56" r="6.500" fill="#cfe6f6" stroke="#2f86c0" stroke-width="1.300"/><path d="M598 56h6" stroke="#2f6da0" stroke-width="1.300"/><path d="M606 61l5 5" stroke="#d2ac55" stroke-width="2.500"/>
<!-- templates -->
<rect x="693.500" y="50.500" width="9" height="12" fill="#fafafa" stroke="#555"/><path d="M702 59h4v3h3v4h-3v3h-4v-3h-3v-4h3z" fill="#32c436" stroke="#1c8a22" stroke-width=".7"/><use href="#dd" x="711" y="56"/>
<circle cx="736" cy="57" r="7.500" fill="#2d78b8" stroke="#1c568c"/><circle cx="736" cy="57" r="4.500" fill="#eaf3fa"/><path d="M736 54v3h2.500" stroke="#333" fill="none"/><use href="#dd" x="748" y="56"/>
<rect x="765.500" y="50.500" width="15" height="13" fill="#eef4fa" stroke="#4a7ca4"/><rect x="766" y="51" width="14" height="3" fill="#4f86b4"/><path d="M768 57h3l2-1h4M768 60h3l2 1h4" stroke="#555" fill="none"/><use href="#dd" x="785" y="56"/>
<!-- toolbar 2 -->
<path d="M17 76v14l3.500-3 2.500 5 2-1-2.500-5 4.500-.5z" fill="#333"/>
<path d="M49.500 75v6M49.500 87v6M41 84.500h6M52 84.500h6" stroke="#555"/>
<path d="M83.500 77v14M105 84.500h14M134 91l12-13" stroke="#666"/>
<path d="M161 88l10-10M165 90l10-10M163 80l6 8M168 78l6 8" stroke="#555" stroke-dasharray="2 1"/>
<path d="M189 78h14M189 81h14M189 84h14M189 87h14" stroke="#777" stroke-dasharray="1 1"/>
<rect x="246.500" y="78.500" width="12" height="12" fill="none" stroke="#777" stroke-dasharray="1 1"/>
<path d="M275 79l3-2 3 2-3 3zM281 88l3-2 3 2-3 3zM274 84l7 4" fill="#444" stroke="#444" stroke-width=".7"/>
<use href="#dd" x="291" y="84"/>
<!-- right toolbar icons -->
<circle cx="1172" cy="56" r="3.500" fill="none" stroke="#3a6cc4" stroke-width="4"/><circle cx="1172" cy="56" r="6" fill="none" stroke="#3a6cc4" stroke-width="2" stroke-dasharray="2.200 2"/>
<use href="#dd" x="1302" y="55"/>
<circle cx="1325" cy="53.500" r="4.500" fill="#eef4fa" stroke="#2f76b8" stroke-width="1.300"/><path d="M1322 57l-4.500 4.500" stroke="#2f76b8" stroke-width="2"/>
<path d="M1342 50h8v11h-3l-3 4v-4h-2a2 2 0 0 1-2-2v-7a2 2 0 0 1 2-2z" fill="#5f8fc4"/>
<!-- market watch arrows -->
<path d="M170 125.500l3-3 3 3" stroke="#2f6da0" stroke-width="1.500" fill="none"/>
<path d="M170 300l3 3 3-3" stroke="#555" stroke-width="1.500" fill="none"/>
<use href="#dn" x="14" y="148"/><use href="#dn" x="14" y="168"/><use href="#dn" x="14" y="188"/><use href="#dn" x="14" y="208"/><use href="#dn" x="14" y="228"/><use href="#dn" x="14" y="248"/><use href="#dn" x="14" y="268"/><use href="#dn" x="14" y="288"/>
<clipPath id="cr"><rect x="0" y="298" width="60" height="12"/></clipPath>
<path clip-path="url(#cr)" d="M14 302l5 5h-3v3h-4v-3h-3z" fill="#38b838"/>
<!-- navigator tree -->
<rect x="10.500" y="354.500" width="10" height="8" fill="#cfe3f4" stroke="#5b8fbd"/><rect x="13.500" y="359.500" width="10" height="8" fill="#fff" stroke="#5b8fbd"/><path d="M15 365l2-2 1 2 2-2" stroke="#2f6da0" fill="none"/>
<path d="M17.500 369V452M22 380h7M22 398h7M22 416h7M22 434h7M22 452h7" stroke="#888" stroke-dasharray="1 1"/>
<use href="#plus" x="17.500" y="380.500"/><use href="#plus" x="17.500" y="398.500"/><use href="#plus" x="17.500" y="416.500"/><use href="#plus" x="17.500" y="434.500"/><use href="#plus" x="17.500" y="452.500"/>
<!-- accounts -->
<circle cx="35" cy="375" r="4.500" fill="#f0c44a" stroke="#a87c18"/><circle cx="41" cy="375" r="4.500" fill="#f0c44a" stroke="#a87c18"/><path d="M31 386v-6h15v6z" fill="#f0c44a" stroke="#a87c18"/><circle cx="32" cy="383" r="3.500" fill="#3ab83a"/>
<!-- indicators -->
<rect x="31.500" y="389.500" width="13" height="14" rx="2" fill="#f6d878" stroke="#b8922c"/>
<text x="35" y="401" font-family="Liberation Serif,serif" font-style="italic" font-weight="bold" font-size="12" fill="#a87c18">f</text>
<!-- EA -->
<ellipse cx="38" cy="412" rx="8" ry="3" fill="#68aede" stroke="#3b7ca8"/><path d="M31 413c3 5 11 5 14 0" fill="#4b8ec4" stroke="#3b7ca8"/><path d="M38 416l4 3-4 3-4-3z" fill="#f0d070" stroke="#a87c18"/>
<!-- custom -->
<rect x="31.500" y="425.500" width="13" height="14" rx="2" fill="#f6d878" stroke="#b8922c"/>
<text x="35" y="437" font-family="Liberation Serif,serif" font-style="italic" font-weight="bold" font-size="12" fill="#a87c18">f</text>
<path d="M43 435l3.500 3-3.500 3-3.500-3z" fill="#f0d070" stroke="#a87c18"/>
<!-- scripts -->
<path d="M33 444h9v11h-9z" fill="#f6e4a4" stroke="#b8922c"/><path d="M35 447h5M35 450h5" stroke="#b8922c"/><path d="M42 453l3.500 3-3.500 3-3.500-3z" fill="#f0d070" stroke="#a87c18"/>
<!-- news docs -->
<use href="#doc" x="26" y="610"/><use href="#doc" x="26" y="630"/><use href="#doc" x="26" y="650"/><use href="#doc" x="26" y="670"/>
<!-- hand drawn ellipse -->
<path d="M205 710C160 692 120 672 115 650C111 628 160 594 232 576C300 562 400 561 468 574C545 590 596 622 598 650C598 678 530 698 468 710" fill="none" stroke="#000" stroke-width="4.500"/>
</svg>
</body>
</html>
